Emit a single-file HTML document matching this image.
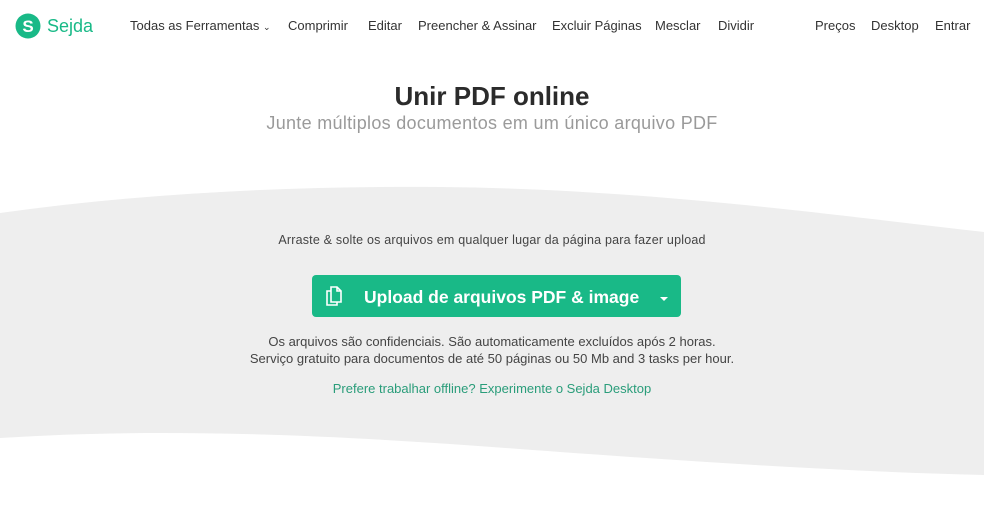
<!DOCTYPE html>
<html><head><meta charset="utf-8"><style>
*{margin:0;padding:0;box-sizing:border-box}
body{width:984px;height:519px;background:#fff;font-family:"Liberation Sans",sans-serif;position:relative;overflow:hidden;color:#333}
.a{position:absolute;white-space:nowrap}
.nav{top:18px;font-size:13px;color:#333}
.c{left:0;width:984px;text-align:center}
</style></head><body>
<svg class="a" style="left:0;top:0" width="984" height="519">
<path d="M0 213 C150 192 300 186 440 187 C650 189 830 215 984 232 L984 475 C850 472 700 462 560 452 C400 440 200 425 0 438 Z" fill="#eeeeee"/>
</svg>
<svg class="a" style="left:15px;top:13px" width="26" height="26"><circle cx="13" cy="13" r="12.5" fill="#19b987"/><text x="13" y="19" font-family="Liberation Sans" font-weight="bold" font-size="17" fill="#fff" text-anchor="middle">S</text></svg>
<div class="a" style="left:47px;top:16px;font-size:18px;color:#19b987">Sejda</div>
<div class="a nav" style="left:130px">Todas as Ferramentas <span style="font-size:9px">&#8964;</span></div>
<div class="a nav" style="left:288px">Comprimir</div>
<div class="a nav" style="left:368px">Editar</div>
<div class="a nav" style="left:418px">Preencher &amp; Assinar</div>
<div class="a nav" style="left:552px">Excluir Páginas</div>
<div class="a nav" style="left:655px">Mesclar</div>
<div class="a nav" style="left:718px">Dividir</div>
<div class="a nav" style="left:815px">Preços</div>
<div class="a nav" style="left:871px">Desktop</div>
<div class="a nav" style="left:935px">Entrar</div>
<div class="a c" style="top:81px;font-size:26px;font-weight:bold;color:#2b2b2b">Unir PDF online</div>
<div class="a c" style="top:113px;font-size:18px;color:#9a9a9a;letter-spacing:0.3px">Junte múltiplos documentos em um único arquivo PDF</div>
<div class="a c" style="top:233px;font-size:12.5px;color:#444;letter-spacing:0.2px">Arraste &amp; solte os arquivos em qualquer lugar da página para fazer upload</div>
<div class="a" style="left:312px;top:275px;width:369px;height:42px;background:#19b987;border-radius:4px"></div>
<svg class="a" style="left:324px;top:285px" width="20" height="22" fill="none" stroke="#fff" stroke-width="1.6"><path d="M7 2h6l4 4v11H7z"/><path d="M13 2v4h4"/><path d="M7 6H3v14h10v-3"/></svg>
<div class="a" style="left:364px;top:287px;font-size:17.5px;font-weight:bold;color:#fff">Upload de arquivos PDF &amp; image</div>
<div class="a" style="left:660px;top:297px;width:0;height:0;border-left:4px solid transparent;border-right:4px solid transparent;border-top:4px solid #fff"></div>
<div class="a c" style="top:334px;font-size:13px;color:#444">Os arquivos são confidenciais. São automaticamente excluídos após 2 horas.</div>
<div class="a c" style="top:351px;font-size:13px;color:#444">Serviço gratuito para documentos de até 50 páginas ou 50 Mb and 3 tasks per hour.</div>
<div class="a c" style="top:381px;font-size:13px;color:#2a9d7a">Prefere trabalhar offline? Experimente o Sejda Desktop</div>
</body></html>
